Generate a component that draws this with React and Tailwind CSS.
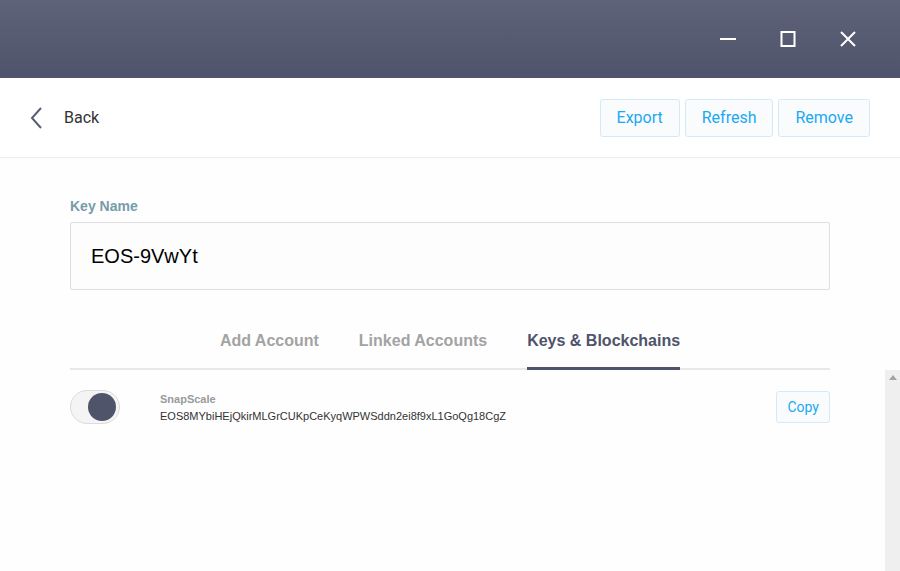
import React from 'react';

const TitleBar = () => (
    <div className="h-[78px] bg-gradient-to-b from-[#5f6379] to-[#4f536b] flex items-center justify-end pr-[44px] gap-[44px] shrink-0">
        <svg width="16" height="16" viewBox="0 0 16 16"><rect x="0" y="7" width="16" height="2" fill="#fff" /></svg>
        <svg width="16" height="16" viewBox="0 0 16 16"><rect x="1.5" y="1" width="13" height="14" fill="none" stroke="#fff" strokeWidth="2" /></svg>
        <svg width="16" height="16" viewBox="0 0 16 16"><path d="M1 1 L15 15 M15 1 L1 15" stroke="#fff" strokeWidth="2" /></svg>
    </div>
);

const HeaderButton = ({ children }) => (
    <button className="h-[38px] px-[16px] rounded-[3px] border border-[#d3ebf8] bg-[#f9fbfd] text-[#1aa9f2] text-[16px] font-['Roboto',sans-serif]">
        {children}
    </button>
);

const App = () => {
    return (
        <div className="w-[900px] h-[571px] flex flex-col bg-[#fefefe] overflow-hidden font-['Liberation_Sans',Arial,sans-serif]">
            <TitleBar />

            {/* Header */}
            <header className="h-[80px] shrink-0 flex items-center justify-between pl-[28px] pr-[30px] border-b border-[#ececec] bg-white">
                <div className="flex items-center gap-[20px]">
                    <svg width="16" height="22" viewBox="0 0 16 22"><path d="M13 1 L4 11 L13 21" fill="none" stroke="#5a5e74" strokeWidth="2" /></svg>
                    <span className="text-[16px] text-[#333] font-['Roboto',sans-serif]">Back</span>
                </div>
                <div className="flex items-center gap-[5px]">
                    <HeaderButton>Export</HeaderButton>
                    <HeaderButton>Refresh</HeaderButton>
                    <HeaderButton>Remove</HeaderButton>
                </div>
            </header>

            {/* Key name + tabs */}
            <div className="px-[70px] pt-[40px] shrink-0">
                <label className="block text-[14px] leading-[16px] font-bold text-[#789ba8] mb-[8px]">Key Name</label>
                <div className="h-[68px] border border-[#dedede] rounded-[2px] bg-[#fdfdfd] flex items-center px-[20px] text-[20px] text-black">
                    EOS-9VwYt
                </div>
                <div className="mt-[29px] flex justify-center gap-[40px] border-b-[2px] border-[#e8e8e8]">
                    <div className="pb-[15px] pt-[10px] text-[16px] font-bold text-[#a3a3a3]">Add Account</div>
                    <div className="pb-[15px] pt-[10px] text-[16px] font-bold text-[#a3a3a3]">Linked Accounts</div>
                    <div className="pb-[12px] pt-[10px] text-[16px] font-bold text-[#4f536b] border-b-[3px] border-[#4f536b] -mb-[2px]">Keys &amp; Blockchains</div>
                </div>
            </div>

            {/* Scroll area */}
            <div className="flex-1 flex min-h-0">
                <div className="flex-1 pl-[70px] pr-[55px] pt-[20px]">
                    <div className="flex items-center">
                        <div className="w-[50px] h-[34px] rounded-full border border-[#dcdcdc] bg-[#f4f4f4] flex items-center justify-end pr-[3px] shrink-0">
                            <div className="w-[28px] h-[28px] rounded-full bg-[#50546b]"></div>
                        </div>
                        <div className="ml-[40px] flex-1">
                            <div className="text-[11px] font-bold text-[#9a9a9a] leading-[14px]">SnapScale</div>
                            <div className="text-[11px] text-[#333] leading-[14px] mt-[3px]">EOS8MYbiHEjQkirMLGrCUKpCeKyqWPWSddn2ei8f9xL1GoQg18CgZ</div>
                        </div>
                        <button className="h-[32px] px-[10px] rounded-[3px] border border-[#d3ebf8] bg-[#f9fbfd] text-[#1aa9f2] text-[14px] font-['Roboto',sans-serif]">Copy</button>
                    </div>
                </div>
                <div className="w-[15px] bg-[#efefef] flex justify-center pt-[5px]">
                    <svg width="8" height="5" viewBox="0 0 8 5"><path d="M0 5 L4 0 L8 5 Z" fill="#a3a3a3" /></svg>
                </div>
            </div>
        </div>
    );
};

export default App;
